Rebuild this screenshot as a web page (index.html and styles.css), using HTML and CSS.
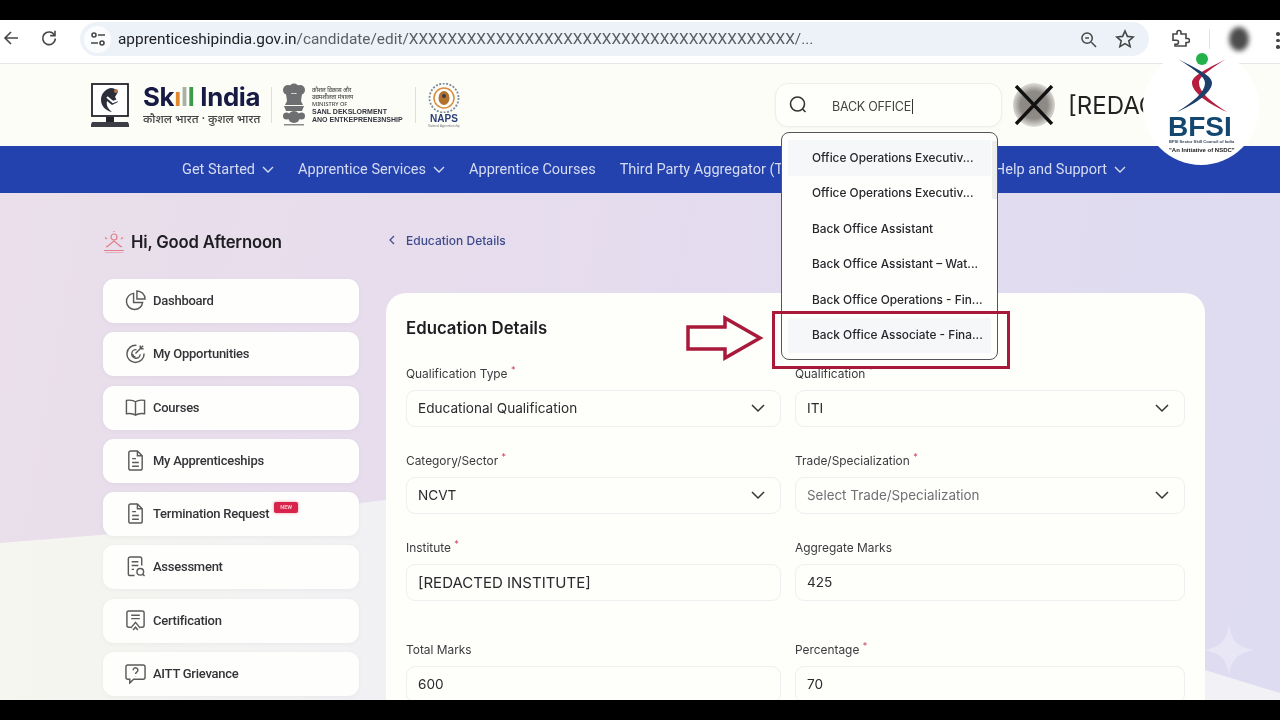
FILE: index.html
```html
<!DOCTYPE html>
<html lang="en">
<head>
<meta charset="utf-8">
<title>Education Details</title>
<link rel="stylesheet" href="styles.css">
</head>
<body>
<div class="frame">
  <div class="letterbox-top"></div>

  <div class="chrome">
    <svg class="c-back" viewBox="0 0 16 16" width="16" height="16"><path d="M15 8H2M8 2 2 8l6 6" /></svg>
    <svg class="c-reload" viewBox="0 0 18 18" width="18" height="18"><path d="M14.5 6.2A6.3 6.3 0 1 0 15.3 9.5" /><path d="M15 1.8v4.8h-4.8" /></svg>
    <div class="pill">
      <span class="tune"><svg viewBox="0 0 16 14" width="16" height="14"><circle cx="4" cy="3" r="2" /><path d="M8 3h7M1 11h7" /><circle cx="12" cy="11" r="2" /></svg></span>
      <span class="url"><b>apprenticeshipindia.gov.in</b>/candidate/edit/XXXXXXXXXXXXXXXXXXXXXXXXXXXXXXXXXXXXXXXX/...</span>
      <svg class="p-zoom" viewBox="0 0 18 18" width="17" height="17"><circle cx="7.5" cy="7.5" r="5.5" /><path d="m12 12 5 5M5.500 7.500h4" /></svg>
      <svg class="p-star" viewBox="0 0 20 20" width="20" height="20"><path d="m10 2 2.400 5.400 5.800.6-4.400 3.900 1.300 5.700-5.100-3-5.100 3 1.300-5.700L1.800 8l5.800-.6z" /></svg>
    </div>
    <svg class="c-ext" viewBox="0 0 20 20" width="20" height="20"><path d="M3 6h4V4.500a2 2 0 0 1 4 0V6h5v4.500h1.500a2 2 0 0 1 0 4H16V18H5v-1.800h1.500a2 2 0 0 0 0-4H3z" /></svg>
    <span class="c-div"></span>
    <span class="c-avatar"></span>
    <span class="c-dots"><i></i><i></i><i></i></span>
  </div>

  <header class="site-head">
    <div class="logos">
      <svg class="lg-monitor" viewBox="0 0 38 44" width="38" height="44">
        <rect x="1" y="1" width="36" height="32" fill="#fff" stroke="#23232b" stroke-width="1.800" />
        <path d="M20 5c-6 1-10 6-10 12 0 6 5 11 11 12-4-3-6-7-5-11l5 4 6-3-3-5 3-5c-2-3-4-4-7-4z" fill="#2c2f3a" />
        <path d="M16 14l6 5 5-2" fill="none" stroke="#fff" stroke-width="2" />
        <circle cx="25" cy="8" r="2" fill="#b8754a" />
        <path d="M15 34h8v5h-8z" fill="#23232b" />
        <path d="M1 39h36l2 5H-1z" fill="#3d3d46" />
      </svg>
      <div class="brand">
        <div class="brand-name">Sk<span class="b-o">ı</span><span class="b-g">l</span><span class="b-n">l</span> India</div>
        <div class="brand-sub">कौशल भारत · कुशल भारत</div>
      </div>
      <span class="lg-div"></span>
      <svg class="lg-emblem" viewBox="0 0 24 44" width="24" height="44">
        <g fill="#6d6f70">
          <circle cx="6" cy="7" r="5" /><circle cx="12" cy="5.500" r="5" /><circle cx="18" cy="7" r="5" />
          <path d="M4 11h16l-1 7 2 4H3l2-4z" />
          <path d="M2 23h20l-2 5H4z" />
          <circle cx="12" cy="34" r="6" /><circle cx="4.500" cy="33" r="3.500" /><circle cx="19.500" cy="33" r="3.500" />
        </g>
        <path d="M2 41h20v1.500H2z" fill="#8a8a8a" />
      </svg>
      <div class="ministry">
        <span class="m-hi">कौशल विकास और</span>
        <span class="m-hi">उद्यमशीलता मंत्रालय</span>
        <span class="m-hi">MINISTRY OF</span>
        <span class="m-en">SANL DEKSLORMENT</span>
        <span class="m-en">ANO ENTKEPRENE3NSHIP</span>
      </div>
      <span class="lg-div lg-div2"></span>
      <div class="naps">
        <svg viewBox="0 0 36 30" width="36" height="30">
          <circle cx="18" cy="15" r="14.500" fill="none" stroke="#7c8a99" stroke-width="1.800" stroke-dasharray="2 1.500" />
          <circle cx="18" cy="15" r="10" fill="#fff" stroke="#d98a3d" stroke-width="1.500" />
          <ellipse cx="18" cy="15" rx="5.500" ry="7" fill="#b0722e" />
          <circle cx="18" cy="13" r="2" fill="#3b3b44" />
        </svg>
        <b>NAPS</b>
        <small>National Apprenticeship</small>
      </div>
    </div>

    <div class="search">
      <svg viewBox="0 0 20 20" width="20" height="20"><circle cx="9.500" cy="9" r="7" /><path d="m14.500 14 3 3" /></svg>
      <span class="search-text">BACK OFFICE</span><span class="caret"></span>
    </div>
    <div class="user-pic">
      <svg viewBox="0 0 40 40" width="40" height="40"><path d="M2 1 38 39M38 1 2 39" /></svg>
    </div>
    <div class="user-name">[REDAC</div>
  </header>

  <nav class="main-nav">
    <a>Get Started <svg viewBox="0 0 12 8" width="12" height="8"><path d="m1 1 5 5 5-5" /></svg></a>
    <a>Apprentice Services <svg viewBox="0 0 12 8" width="12" height="8"><path d="m1 1 5 5 5-5" /></svg></a>
    <a>Apprentice Courses</a>
    <a>Third Party Aggregator (TPA)</a>
    <a class="nav-last">Help and Support <svg viewBox="0 0 12 8" width="12" height="8"><path d="m1 1 5 5 5-5" /></svg></a>
  </nav>

  <main class="main">
    <svg class="star" viewBox="0 0 50 50" width="50" height="50"><path d="M25 0c2 15 8 22 25 25-17 3-23 10-25 25-2-15-8-22-25-25 17-3 23-10 25-25z" /></svg>

    <aside class="side">
      <div class="greet">
        <svg viewBox="0 0 22 22" width="22" height="22"><circle cx="11" cy="6" r="3" /><path d="M3 16c3-1 4-3 8-6 4 3 5 5 8 6M1 19.500h20M2 22h18M4 8 2 6.500M18 8l2-1.500M11 1V0" /></svg>
        <span>Hi, Good Afternoon</span>
      </div>
      <ul class="menu">
        <li><svg viewBox="0 0 22 22"><path d="M9 3.500a8.500 8.500 0 1 0 9.500 9.500H9z" /><path d="M12.500 1A8.500 8.500 0 0 1 21 9.500h-8.500z" /></svg>Dashboard</li>
        <li><svg viewBox="0 0 22 22"><path d="M12 2.500A9 9 0 1 0 20 11" /><path d="M12 7a4.500 4.500 0 1 0 4 5" /><path d="M11 11 19 3M16 2.500V6h3.500" /><path d="M8 11.500a3 3 0 0 0 3 3" /></svg>My Opportunities</li>
        <li><svg viewBox="0 0 22 22"><path d="M11 5C9 3.500 5 3 1.500 3.500v14C5 17 9 17.500 11 19c2-1.500 6-2 9.500-1.500v-14C17 3 13 3.500 11 5zM11 5v14" /></svg>Courses</li>
        <li><svg viewBox="0 0 22 22"><path d="M4 3a2 2 0 0 1 2-2h7l5 5v13a2 2 0 0 1-2 2H6a2 2 0 0 1-2-2z" /><path d="M13 1v5h5M7.500 9h4M7.500 13h7M7.500 17h7" /></svg>My Apprenticeships</li>
        <li><svg viewBox="0 0 22 22"><path d="M4 3a2 2 0 0 1 2-2h7l5 5v13a2 2 0 0 1-2 2H6a2 2 0 0 1-2-2z" /><path d="M13 1v5h5M7.500 9h4M7.500 13h7M7.500 17h7" /></svg>Termination Request<span class="new">NEW</span></li>
        <li><svg viewBox="0 0 22 22"><path d="M10 20.500H5.500a2 2 0 0 1-2-2V3a2 2 0 0 1 2-2h10a2 2 0 0 1 2 2v7" /><path d="M7 6h7M7 10h7M7 14h2.500" /><circle cx="16" cy="16.500" r="3.500" /><path d="m18.500 19 2 2" /></svg>Assessment</li>
        <li><svg viewBox="0 0 22 22"><path d="M6 18H4a2 2 0 0 1-2-2V3a2 2 0 0 1 2-2h14a2 2 0 0 1 2 2v13a2 2 0 0 1-2 2h-2" /><path d="M6.500 5.500h9M6.500 9h9" /><path d="m6 19 5-6 5 6M8.500 21l2.500-3 2.500 3" /></svg>Certification</li>
        <li><svg viewBox="0 0 22 22"><path d="M3 2h16a2 2 0 0 1 2 2v11a2 2 0 0 1-2 2H9l-4 4v-4H3a2 2 0 0 1-2-2V4a2 2 0 0 1 2-2z" /><path d="M8.500 7.500a2.500 2.500 0 1 1 3.800 2.100c-.9.6-1.300 1-1.300 2M11 13.700v.3" /></svg>AITT Grievance</li>
      </ul>
    </aside>

    <section class="content">
      <div class="crumb">
        <svg viewBox="0 0 6 10" width="6" height="10"><path d="M5 1 1 5l4 4" /></svg>
        <span>Education Details</span>
      </div>
      <div class="card">
        <h1>Education Details</h1>
        <form class="form-grid">
          <div class="field">
            <label>Qualification Type <sup>*</sup></label>
            <div class="input">Educational Qualification<svg viewBox="0 0 14 9" width="14" height="9"><path d="m1 1 6 6 6-6" /></svg></div>
          </div>
          <div class="field">
            <label>Qualification <sup>*</sup></label>
            <div class="input">ITI<svg viewBox="0 0 14 9" width="14" height="9"><path d="m1 1 6 6 6-6" /></svg></div>
          </div>
          <div class="field">
            <label>Category/Sector <sup>*</sup></label>
            <div class="input">NCVT<svg viewBox="0 0 14 9" width="14" height="9"><path d="m1 1 6 6 6-6" /></svg></div>
          </div>
          <div class="field">
            <label>Trade/Specialization <sup>*</sup></label>
            <div class="input placeholder">Select Trade/Specialization<svg viewBox="0 0 14 9" width="14" height="9"><path d="m1 1 6 6 6-6" /></svg></div>
          </div>
          <div class="field spaced">
            <label>Institute <sup>*</sup></label>
            <div class="input big">[REDACTED INSTITUTE]</div>
          </div>
          <div class="field spaced">
            <label>Aggregate Marks</label>
            <div class="input">425</div>
          </div>
          <div class="field">
            <label>Total Marks</label>
            <div class="input">600</div>
          </div>
          <div class="field">
            <label>Percentage <sup>*</sup></label>
            <div class="input">70</div>
          </div>
        </form>
      </div>
    </section>
  </main>

  <div class="letterbox-bottom"></div>

  <ul class="dropdown">
    <li class="hl">Office Operations Executiv...</li>
    <li>Office Operations Executiv...</li>
    <li>Back Office Assistant</li>
    <li>Back Office Assistant – Wat...</li>
    <li>Back Office Operations - Fin...</li>
    <li class="hl">Back Office Associate - Fina...</li>
  </ul>
  <div class="redbox"></div>
  <svg class="arrow" viewBox="0 0 78 46" width="78" height="46"><path d="M2 12h37V3l35 20-35 20v-9H2z" /></svg>

  <div class="bfsi">
    <span class="bfsi-dot"></span>
    <svg viewBox="0 0 100 62" width="100" height="62">
      <path class="s-red" d="M75 3C52 15 41 20 41 27c0 9 16 21 35 29-16-10-28-20-28-29 0-7 12-14 27-24z" />
      <path class="s-navy" d="M27 3c23 12 34 17 34 24 0 9-16 21-35 29 16-10 28-20 28-29 0-7-12-14-27-24z" />
    </svg>
    <strong>BFSI</strong>
    <small>BFSI Sector Skill Council of India</small>
    <em>"An Initiative of NSDC"</em>
  </div>
</div>
</body>
</html>
```
FILE: styles.css
```css
* { box-sizing: border-box; }
html, body { margin: 0; height: 100%; background: #000; }
body { font-family: Inter, "Noto Sans", sans-serif; color: #222; overflow: hidden; }
.frame { position: relative; width: 1280px; height: 720px; display: flex; flex-direction: column; overflow: hidden; background: #000; filter: blur(.35px); }
.letterbox-top { height: 20px; flex: none; }
.letterbox-bottom { height: 20px; flex: none; background: #000; position: relative; }

/* browser chrome */
.chrome { flex: none; height: 44px; background: #fff; border-bottom: 1.5px solid #e6e7e6; display: flex; align-items: flex-start; padding: 2px 0 0 3px; }
.chrome svg { fill: none; stroke: #454746; stroke-width: 1.6; flex: none; }
.c-back { margin: 8px 0 0 0; }
.c-reload { margin: 7px 0 0 21px; }
.pill { margin-left: 22px; width: 1069px; height: 34px; border-radius: 17px; background: #edf2f9; display: flex; align-items: center; padding-left: 4px; }
.tune { width: 27px; height: 27px; border-radius: 50%; background: #fbfcfe; display: flex; align-items: center; justify-content: center; flex: none; }
.url { margin-left: 7px; font: 400 15.4px Roboto, sans-serif; color: #5a5d62; white-space: nowrap; width: 962px; flex: none; }
.url b { font-weight: 400; color: #202124; }
.p-zoom { margin-left: 0; }
.chrome .p-star { margin-left: 18px; }
.chrome .c-ext { margin: 6px 0 0 21px; }
.c-div { width: 1px; height: 20px; background: #dfe2e6; margin: 7px 0 0 19px; flex: none; }
.c-avatar { width: 20px; height: 24px; border-radius: 50%; background: #4c4c4c; filter: blur(2.5px); margin: 5px 0 0 19px; flex: none; }
.c-dots { display: flex; flex-direction: column; gap: 3px; margin: 10px 0 0 27px; flex: none; }
.c-dots i { width: 3.5px; height: 3.5px; border-radius: 50%; background: #454746; }

/* header */
.site-head { flex: none; height: 82px; background: #fdfdf8; display: flex; align-items: center; padding: 0 136px 0 91px; }
.logos { display: flex; align-items: center; }
.lg-monitor { flex: none; }
.brand { margin-left: 14px; width: 117px; }
.brand-name { font: 700 25.8px/24px Inter, sans-serif; color: #161a45; letter-spacing: -.3px; white-space: nowrap; }
.b-o { color: #e2892f; } .b-g { color: #a9b0a5; } .b-n { color: #3c9a4c; }
.brand-sub { font: 500 11.8px/15px "Noto Sans", "DejaVu Sans", sans-serif; color: #444; white-space: nowrap; margin-top: 2px; }
.lg-div { width: 1px; height: 36px; background: #dedede; margin: 0 10px 0 11px; flex: none; }
.lg-emblem { flex: none; }
.ministry { margin-left: 6px; width: 92px; display: flex; flex-direction: column; line-height: 1; white-space: nowrap; }
.m-hi { font: 500 5.6px/7px "Noto Sans", sans-serif; color: #444; }
.m-en { font: 700 7px/7.5px "Liberation Sans", sans-serif; color: #33353f; }
.lg-div2 { margin: 0 10px 0 11px; }
.naps { width: 36px; display: flex; flex-direction: column; align-items: center; }
.naps b { font: 700 10px/11px "Liberation Sans", sans-serif; color: #2a3f78; }
.naps small { font: 400 3px/4px "Liberation Sans", sans-serif; color: #777; white-space: nowrap; }
.search { margin-left: auto; width: 227px; height: 44px; flex: none; background: #fefefb; border: 1.5px solid #eeeeea; border-radius: 13px; display: flex; align-items: center; padding-left: 12px; box-shadow: 0 1px 3px rgba(0,0,0,.04); }
.search svg { fill: none; stroke: #333; stroke-width: 1.6; flex: none; }
.search-text { font-size: 12.5px; letter-spacing: -.25px; color: #444; margin: 2px 0 0 24px; white-space: nowrap; }
.caret { width: 1px; height: 15px; background: #333; margin: 2px 0 0 1px; }
.user-pic { width: 42px; height: 44px; margin-left: 11px; flex: none; border-radius: 50%; background: radial-gradient(circle, #8a8580 0, #8f8b86 45%, #e9e8e3 75%, #fdfdf8 100%); display: flex; align-items: center; justify-content: center; }
.user-pic svg { fill: none; stroke: #111; stroke-width: 3.4; }
.user-name { margin: 2px 0 0 13px; width: 76px; flex: none; white-space: nowrap; font-size: 24px; line-height: 30px; color: #222; }

/* nav */
.main-nav { flex: none; height: 47px; background: #2442ad; display: flex; align-items: center; padding: 0 154px 0 182px; gap: 24px; }
.main-nav a { font: 400 14.5px Roboto, sans-serif; color: #d5dbf2; white-space: nowrap; display: flex; align-items: center; gap: 7px; }
.main-nav svg { fill: none; stroke: #d5dbf2; stroke-width: 1.4; }
.nav-last { margin-left: auto; }

/* main */
.main { flex: 1; min-height: 0; position: relative; overflow: hidden; display: flex; padding: 37px 0 0 103px; background: linear-gradient(100deg, #eadfea 0, #e5dcee 45%, #dedcf1 100%); }
.main::before { content: ""; position: absolute; inset: 0; background: linear-gradient(90deg, #f5f6ef 0, #f1f1f4 30%, #f1f1f6 100%); clip-path: polygon(0 350px, 100px 342px, 200px 332px, 300px 318px, 400px 305px, 1000px 400px, 1100px 445px, 1280px 500px, 1280px 507px, 0 507px); }
.star { position: absolute; left: 1204px; top: 432px; fill: #f6f5fb; opacity: .45; }
.side { width: 256px; flex: none; position: relative; }
.greet { display: flex; align-items: center; height: 24px; margin-bottom: 25px; }
.greet svg { fill: none; stroke: #e0808a; stroke-width: 1.2; flex: none; }
.greet span { margin-left: 6px; font-size: 16.7px; font-weight: 600; color: #1d1d22; letter-spacing: -.2px; white-space: nowrap; }
.menu { list-style: none; margin: 0; padding: 0; display: flex; flex-direction: column; gap: 9.3px; }
.menu li { height: 44px; background: #fefefc; border-radius: 11px; display: flex; align-items: center; padding: 0 0 1px 22px; font: 500 13px Roboto, sans-serif; letter-spacing: -.25px; color: #333338; white-space: nowrap; box-shadow: 0 1px 4px rgba(120,110,160,.07); }
.menu svg { width: 21px; height: 21px; fill: none; stroke: #5a5a5a; stroke-width: 1.5; flex: none; margin-right: 7px; }
.new { align-self: flex-start; margin: 10px 0 0 5px; width: 24px; height: 11px; background: #d8234a; border-radius: 2px; color: #f7c6cf; font-size: 5.5px; font-weight: 700; line-height: 11px; text-align: center; letter-spacing: 0; box-shadow: 0 0 3px rgba(216,35,74,.5); }
.content { width: 819px; margin-left: 27px; flex: none; position: relative; }
.crumb { height: 20px; display: flex; align-items: center; margin-bottom: 43px; padding-left: 3px; }
.crumb svg { fill: none; stroke: #45458a; stroke-width: 1.2; }
.crumb span { margin-left: 11px; font-size: 12px; font-weight: 500; color: #3f4a8c; white-space: nowrap; }
.card { background: #fefefa; border-radius: 20px; padding: 23px 20px 40px; }
.card h1 { margin: 0 0 25px; font-size: 16.8px; line-height: 24px; font-weight: 600; color: #1d1d22; }
.form-grid { display: grid; grid-template-columns: 375px 390px; column-gap: 14px; row-gap: 25px; }
.field label { display: block; font-size: 11.9px; line-height: 18.500px; color: #3b3b40; margin-bottom: 6.500px; white-space: nowrap; }
.field sup { color: #c8395a; font-size: 9px; line-height: 0; }
.field.spaced { margin-bottom: 15px; }
.input { height: 37px; border: 1.5px solid #eeeff0; border-radius: 9px; background: #fefefb; display: flex; align-items: center; justify-content: space-between; padding: 0 15px 1px 11px; font-size: 13.6px; color: #2a2a2e; white-space: nowrap; }
.input svg { fill: none; stroke: #333; stroke-width: 1.5; flex: none; margin-top: 1px; }
.placeholder { color: #6d6f73; font-size: 13.4px; }
.big { font-size: 15px; }

/* dropdown and annotation */
.dropdown { position: absolute; left: 781px; top: 132px; width: 217px; height: 228px; margin: 0; padding: 7px 6px; list-style: none; background: #fefefc; border: 1.5px solid #55565a; border-radius: 8px; }
.dropdown::after { content: ""; position: absolute; right: 0; top: 8px; width: 5px; height: 58px; background: #eeeeee; }
.dropdown li { height: 35.5px; padding-left: 24px; display: flex; align-items: center; font-size: 11.85px; font-weight: 500; color: #26262b; white-space: nowrap; }
.dropdown li.hl { background: #f5f7f9; }
.redbox { position: absolute; left: 772px; top: 311px; width: 238px; height: 58px; border: 3.5px solid #a8193a; }
.arrow { position: absolute; left: 686px; top: 315px; }
.arrow path { fill: #fefefa; stroke: #a8193a; stroke-width: 3.5; }

/* BFSI badge */
.bfsi { position: absolute; left: 1143px; top: 49px; width: 116px; height: 116px; border-radius: 50%; background: #fff; display: flex; flex-direction: column; align-items: center; }
.bfsi svg { position: absolute; left: 8px; top: 7px; }
.bfsi-dot { position: absolute; left: 53px; top: 4px; width: 12px; height: 12px; border-radius: 50%; background: #23b14a; }
.s-navy { fill: #1c3f6b; } .s-red { fill: #b51e3e; }
.bfsi strong { position: absolute; top: 67px; left: 25px; font: 700 28px/22px "Liberation Sans", sans-serif; color: #14476f; }
.bfsi small { position: absolute; top: 90px; left: 26px; font: 700 4.150px/6px "Liberation Sans", sans-serif; color: #33475b; white-space: nowrap; }
.bfsi em { position: absolute; top: 98px; left: 26px; font: 700 6px/7px "Liberation Sans", sans-serif; color: #222; white-space: nowrap; }
```
